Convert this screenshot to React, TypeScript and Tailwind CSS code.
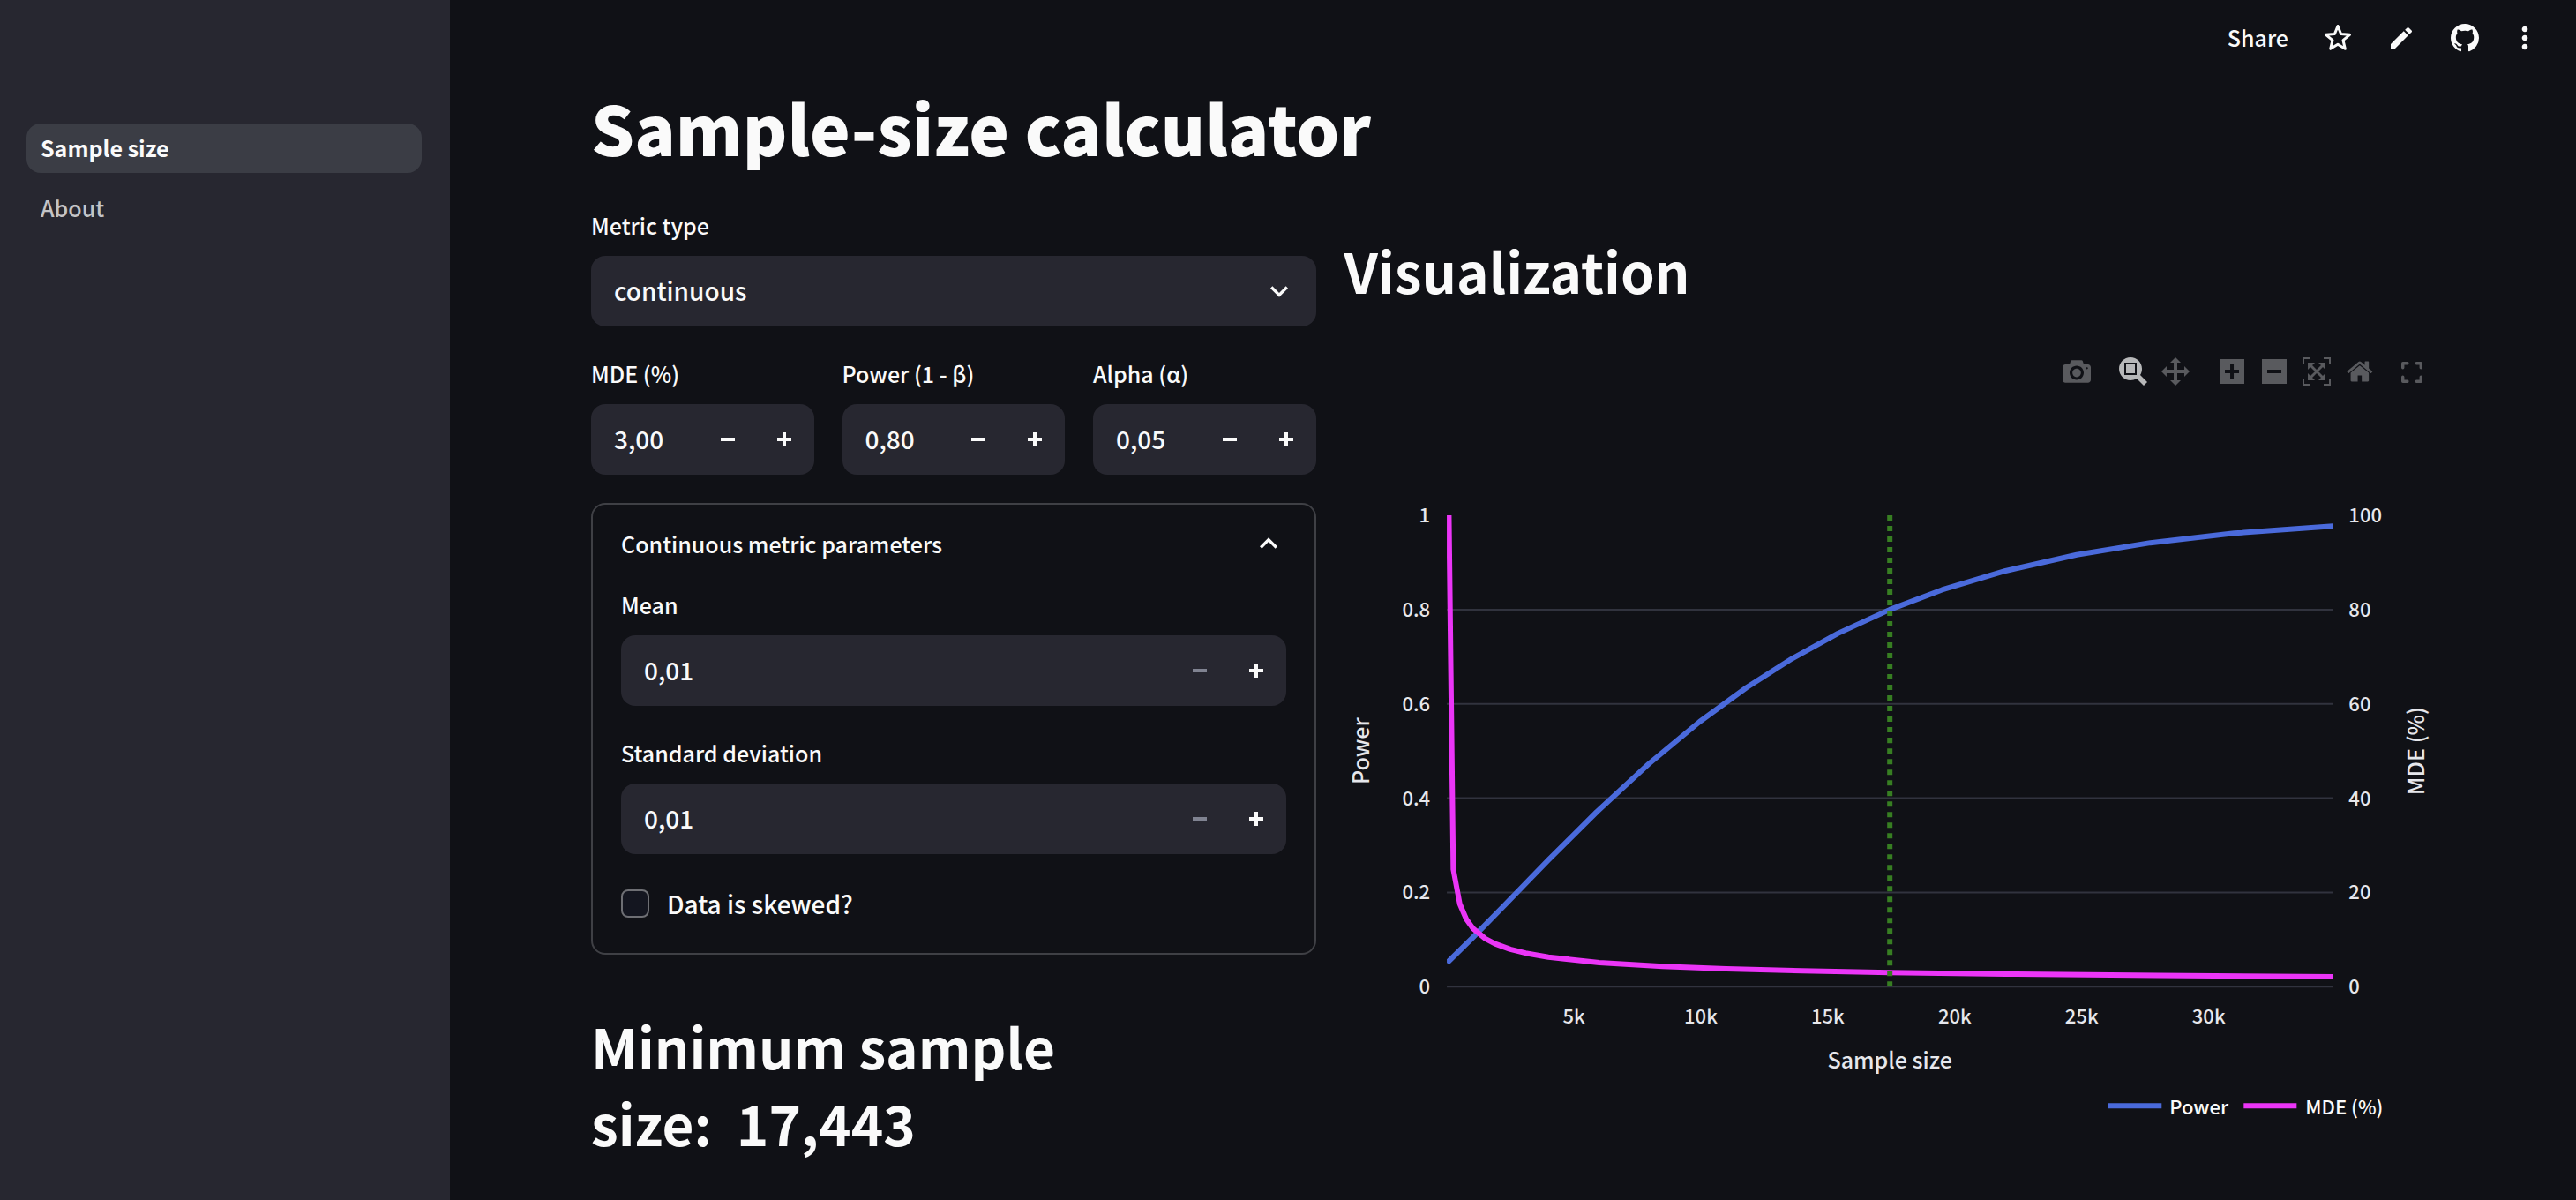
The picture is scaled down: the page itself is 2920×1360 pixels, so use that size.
import { useId, useState } from 'react';
import type { ReactNode } from 'react';
import { MdEdit, MdExpandLess, MdExpandMore, MdMoreVert } from 'react-icons/md';

const PLUS = 'M3 0v3h-3v2h3v3h2v-3h3v-2h-3v-3h-2z';
const MINUS = 'M0 3v2h8v-2h-8z';
const GITHUB = 'M8 0C3.58 0 0 3.58 0 8c0 3.54 2.29 6.53 5.47 7.59.4.07.55-.17.55-.38 0-.19-.01-.82-.01-1.49-2.01.37-2.53-.49-2.69-.94-.09-.23-.48-.94-.82-1.13-.28-.15-.68-.52-.01-.53.63-.01 1.08.58 1.23.82.72 1.21 1.87.87 2.33.66.07-.52.28-.87.51-1.07-1.78-.2-3.64-.89-3.64-3.95 0-.87.31-1.59.82-2.15-.08-.2-.36-1.02.08-2.12 0 0 .67-.21 2.2.82.64-.18 1.32-.27 2-.27s1.36.09 2 .27c1.53-1.04 2.2-.82 2.2-.82.44 1.1.16 1.92.08 2.12.51.56.82 1.27.82 2.15 0 3.07-1.87 3.75-3.65 3.95.29.25.54.73.54 1.48 0 1.07-.01 1.93-.01 2.2 0 .21.15.46.55.38A8.01 8.01 0 0 0 16 8c0-4.42-3.58-8-8-8z';

const LABEL = 'mb-[14px] block text-[25px] leading-[42px]';

function NumberField({ label, value, atMin = false }: { label: string; value: string; atMin?: boolean }) {
  const id = useId();
  const [text, setText] = useState(value);
  return (
    <div className="min-w-0">
      <label htmlFor={id} className={LABEL}>{label}</label>
      <div className="flex h-20 rounded-2xl bg-[#272730] pr-0.5">
        <input
          id={id}
          value={text}
          onChange={(e) => setText(e.target.value)}
          className="min-w-0 flex-1 bg-transparent pb-0.5 pl-[26px] text-[28px] outline-none"
        />
        <button type="button" aria-label={`Decrease ${label}`} disabled={atMin} className="flex w-16 items-center justify-center disabled:text-[#808391]">
          <svg viewBox="0 0 8 8" className="size-4 fill-current"><path d={MINUS} /></svg>
        </button>
        <button type="button" aria-label={`Increase ${label}`} className="flex w-16 items-center justify-center">
          <svg viewBox="0 0 8 8" className="size-4 fill-current"><path d={PLUS} /></svg>
        </button>
      </div>
    </div>
  );
}

/* Plot toolbar glyphs are drawn on a 1000-unit grid whose y axis points up. */
const TOOLS = {
  camera: 'm500 450c-83 0-150-67-150-150 0-83 67-150 150-150 83 0 150 67 150 150 0 83-67 150-150 150z m400 150h-120c-16 0-34 13-39 29l-31 93c-6 15-23 28-40 28h-340c-16 0-34-13-39-28l-31-94c-6-15-23-28-40-28h-120c-55 0-100-45-100-100v-450c0-55 45-100 100-100h800c55 0 100 45 100 100v450c0 55-45 100-100 100z m-400-550c-138 0-250 112-250 250 0 138 112 250 250 250 138 0 250-112 250-250 0-138-112-250-250-250z m365 380c-19 0-35 16-35 35 0 19 16 35 35 35 19 0 35-16 35-35 0-19-16-35-35-35z',
  zoom: 'm1000-25l-250 251c40 63 63 138 63 218 0 224-182 406-407 406-224 0-406-182-406-406s183-406 407-406c80 0 155 22 218 62l250-250 125 125z m-812 250l0 438 437 0 0-438-437 0z m62 375l313 0 0-312-313 0 0 312z',
  pan: 'm1000 350l-187 188 0-125-250 0 0 250 125 0-188 187-187-187 125 0 0-250-250 0 0 125-188-188 186-187 0 125 252 0 0-250-125 0 187-188 188 188-125 0 0 250 250 0 0-126 187 188z',
  zoomIn: 'm1 787l0-875 875 0 0 875-875 0z m687-500l-187 0 0-187-125 0 0 187-188 0 0 125 188 0 0 187 125 0 0-187 187 0 0-125z',
  zoomOut: 'm0 788l0-876 875 0 0 876-875 0z m688-500l-500 0 0 125 500 0 0-125z',
  autoscale: 'm250 850l-187 0-63 0 0-62 0-188 63 0 0 188 187 0 0 62z m688 0l-188 0 0-62 188 0 0-188 62 0 0 188 0 62-62 0z m-875-938l0 188-63 0 0-188 0-62 63 0 187 0 0 62-187 0z m875 188l0-188-188 0 0-62 188 0 62 0 0 62 0 188-62 0z m-125 188l-1 0-93-94-156 156 156 156 92-93 2 0 0 250-250 0 0-2 93-92-156-156-156 156 94 92 0 2-250 0 0-250 0 0 93 93 157-156-157-156-93 94 0 0 0-250 250 0 0 0-94 93 156 157 156-157-93-93 0 0 250 0 0 250z',
  home: 'm786 296v-267q0-15-11-26t-25-10h-214v214h-143v-214h-214q-15 0-25 10t-11 26v267q0 1 0 2t0 2l321 264 321-264q1-1 1-4z m124 39l-34-41q-5-5-12-6h-2q-7 0-12 3l-386 322-386-322q-7-4-13-4-7 2-12 7l-35 41q-4 5-3 13t6 12l401 334q18 15 42 15t43-15l136-114v109q0 8 5 13t13 5h107q8 0 13-5t5-13v-227l122-102q5-5 6-12t-4-13z',
};

function Tool({ label, d, width = 1000, active = false }: { label: string; d: string; width?: number; active?: boolean }) {
  return (
    <button type="button" aria-label={label} className={active ? 'text-[#b7b8b9]' : 'text-[#595a5e]'}>
      <svg viewBox={`0 0 ${width} 1000`} className="h-8 fill-current">
        <path d={d} transform="matrix(1 0 0 -1 0 850)" />
      </svg>
    </button>
  );
}

function Modebar() {
  return (
    <div className="mt-[55px] flex h-8 items-center justify-end pr-2.5">
      <Tool label="Download plot as a png" d={TOOLS.camera} />
      <div className="ml-8 flex gap-4">
        <Tool label="Zoom" d={TOOLS.zoom} active />
        <Tool label="Pan" d={TOOLS.pan} />
      </div>
      <div className="mr-8 ml-[34px] flex gap-[18px]">
        <div className="flex gap-5">
          <Tool label="Zoom in" d={TOOLS.zoomIn} width={875} />
          <Tool label="Zoom out" d={TOOLS.zoomOut} width={875} />
        </div>
        <Tool label="Autoscale" d={TOOLS.autoscale} />
        <Tool label="Reset axes" d={TOOLS.home} width={930} />
      </div>
      <button type="button" aria-label="Fullscreen" className="text-[#595a5e]">
        <svg viewBox="0 0 14 14" className="mt-0.5 size-6 fill-none stroke-current stroke-2 [stroke-linecap:round] [stroke-linejoin:round]">
          <path d="M1 4V1h3M10 1h3v3M13 10v3h-3M4 13H1v-3" />
        </svg>
      </button>
    </div>
  );
}

const PLOT = { x: 116, y: 147, w: 1004, h: 534 };
const SAMPLE = 17443;
const px = (n: number) => PLOT.x + (n / (2 * SAMPLE)) * PLOT.w;
const py = (v: number) => PLOT.y + (1 - v) * PLOT.h;

/* Standard normal CDF, Abramowitz-Stegun 26.2.17. */
function phi(z: number): number {
  if (z < 0) return 1 - phi(-z);
  const t = 1 / (1 + 0.2316419 * z);
  const poly = t * (0.31938153 + t * (-0.356563782 + t * (1.781477937 + t * (-1.821255978 + t * 1.330274429))));
  return 1 - (Math.exp((-z * z) / 2) / Math.sqrt(2 * Math.PI)) * poly;
}
const power = (n: number) => {
  const shift = 2.8016 * Math.sqrt(n / SAMPLE);
  return phi(shift - 1.96) + phi(-shift - 1.96);
};
/* The MDE line enters the plot from above at n = 84. */
const mde = (n: number) => (n < 100 ? 1 : (3 * Math.sqrt(SAMPLE / n)) / 100);
const line = (ns: number[], f: (n: number) => number) => ns.map((n) => `${px(n).toFixed(1)},${py(f(n)).toFixed(1)}`).join(' ');

const POWER_NS = [8, 1024, 2300, 4000, 5900, 7950, 9950, 11800, 13600, 15400, SAMPLE, 19500, 22000, 24800, 27700, 31000, 34886];
const MDE_NS = [84, 253, 510, 767, 1024, 1518, 1900, 2500, 3100, 4000, 6000, 8500, 11000, 14000, SAMPLE, 22000, 28000, 34886];

function Chart() {
  return (
    <svg viewBox="0 0 1232 850" role="img" aria-label="Power and MDE by sample size" className="w-full fill-[#e6e7ec] text-[22px]">
      <defs>
        <clipPath id="plot-area"><rect x={PLOT.x} y={PLOT.y} width={PLOT.w} height={PLOT.h} /></clipPath>
      </defs>
      {[0, 0.2, 0.4, 0.6, 0.8].map((v) => (
        <line key={v} x1={PLOT.x} x2={PLOT.x + PLOT.w} y1={py(v)} y2={py(v)} stroke="#31333e" strokeWidth="2" />
      ))}
      <g clipPath="url(#plot-area)" fill="none" strokeWidth="6" strokeLinejoin="round">
        <polyline points={line(POWER_NS, power)} stroke="#4a6adb" />
        <polyline points={line(MDE_NS, mde)} stroke="#eb35f7" />
        <line x1={px(SAMPLE)} x2={px(SAMPLE)} y1={PLOT.y} y2={PLOT.y + PLOT.h} stroke="#377e22" strokeDasharray="6 6" />
      </g>
      {[0, 0.2, 0.4, 0.6, 0.8, 1].map((v) => (
        <g key={v}>
          <text x="97" y={py(v) + 8} textAnchor="end">{v}</text>
          <text x="1138" y={py(v) + 8}>{v * 100}</text>
        </g>
      ))}
      {[5, 10, 15, 20, 25, 30].map((k) => (
        <text key={k} x={px(k * 1000)} y="723" textAnchor="middle">{k}k</text>
      ))}
      <g className="text-[25px]" textAnchor="middle">
        <text x="618" y="774">Sample size</text>
        <text transform="translate(28 414) rotate(-90)">Power</text>
        <text transform="translate(1224 414) rotate(-90)">MDE (%)</text>
      </g>
      <g strokeWidth="6">
        <line x1="865" x2="926" y1="816" y2="816" stroke="#4a6adb" />
        <line x1="1019" x2="1079" y1="816" y2="816" stroke="#eb35f7" />
      </g>
      <g className="fill-[#fafafa]">
        <text x="935" y="826">Power</text>
        <text x="1089" y="826">MDE (%)</text>
      </g>
    </svg>
  );
}

function HeaderButton({ label, children }: { label: string; children: ReactNode }) {
  return (
    <button type="button" aria-label={label} className="flex h-10 items-center justify-center">
      {children}
    </button>
  );
}

export default function App() {
  return (
    <div className="flex min-h-screen bg-[#101116] font-['Noto_Sans_CJK_SC','Noto_Sans',sans-serif] font-medium text-[#fafafa]">
      <aside className="w-[510px] shrink-0 bg-[#272730] px-8 pt-[140px]">
        <nav className="-ml-0.5 flex flex-col gap-3 text-[25px] leading-[54px]">
          <a href="#sample-size" aria-current="page" className="rounded-2xl bg-[#3b3d45] px-4 pb-0.5 font-bold">Sample size</a>
          <a href="#about" className="rounded-2xl px-4 pb-0.5 text-[#c4c4c6]">About</a>
        </nav>
      </aside>

      <main className="min-w-0 flex-1">
        <header className="flex h-24 items-start justify-end gap-10 pt-[23px] pr-[46px]">
          <button type="button" className="text-[25px] leading-[38px]">Share</button>
          <HeaderButton label="Star">
            <svg viewBox="0 0 32 32" className="size-8 fill-none stroke-current stroke-3 [stroke-linejoin:round]">
              <path d="M16 2.5l3.6 9 9.9.8-7.5 6.4 2.3 9.6-8.3-5-8.3 5L10 18.700l-7.500-6.400 9.900-.8z" />
            </svg>
          </HeaderButton>
          <HeaderButton label="Edit"><MdEdit className="size-8" /></HeaderButton>
          <HeaderButton label="GitHub">
            <svg viewBox="0 0 16 16" className="size-8 fill-current"><path d={GITHUB} /></svg>
          </HeaderButton>
          <HeaderButton label="More"><MdMoreVert className="-mx-2 size-10" /></HeaderButton>
        </header>

        <div className="pr-[164px] pl-40">
          <h1 className="text-[77px] leading-[96px] font-black">Sample-size calculator</h1>

          <div className="mt-[42px] grid grid-cols-[2fr_3fr] gap-8">
            <section className="min-w-0">
              <label htmlFor="metric-type" className={LABEL}>Metric type</label>
              <div className="relative">
                <select id="metric-type" defaultValue="continuous" className="h-20 w-full appearance-none rounded-2xl bg-[#272730] px-[26px] pb-0.5 text-[28px] outline-none">
                  <option value="continuous">continuous</option>
                  <option value="binary">binary</option>
                </select>
                <MdExpandMore className="pointer-events-none absolute top-5 right-[22px] size-10 stroke-current" />
              </div>

              <div className="mt-8 grid grid-cols-3 gap-8">
                <NumberField label="MDE (%)" value="3,00" />
                <NumberField label="Power (1 - β)" value="0,80" />
                <NumberField label="Alpha (α)" value="0,05" />
              </div>

              <details open className="mt-8 rounded-2xl border-2 border-[#3f4045] px-8 pt-6 pb-8">
                <summary className="flex items-center justify-between text-[25px] leading-10">
                  Continuous metric parameters
                  <MdExpandLess className="-my-2 size-10" />
                </summary>
                <div className="mt-7 flex flex-col gap-8">
                  <NumberField label="Mean" value="0,01" atMin />
                  <NumberField label="Standard deviation" value="0,01" atMin />
                  <label className="flex items-center gap-5 text-[28px] leading-[48px]">
                    <input type="checkbox" className="size-8 appearance-none rounded-lg border-2 border-[#6e6f74] bg-[#141620] checked:bg-[#eb35f7]" />
                    Data is skewed?
                  </label>
                </div>
              </details>

              <h2 className="mt-[60px] w-3/4 text-[62px] leading-[87px] font-bold">Minimum sample size: &nbsp;17,443</h2>
            </section>

            <section className="min-w-0">
              <h2 className="mt-7 text-[62px] leading-[88px] font-bold">Visualization</h2>
              <Modebar />
              <Chart />
            </section>
          </div>
        </div>
      </main>
    </div>
  );
}
